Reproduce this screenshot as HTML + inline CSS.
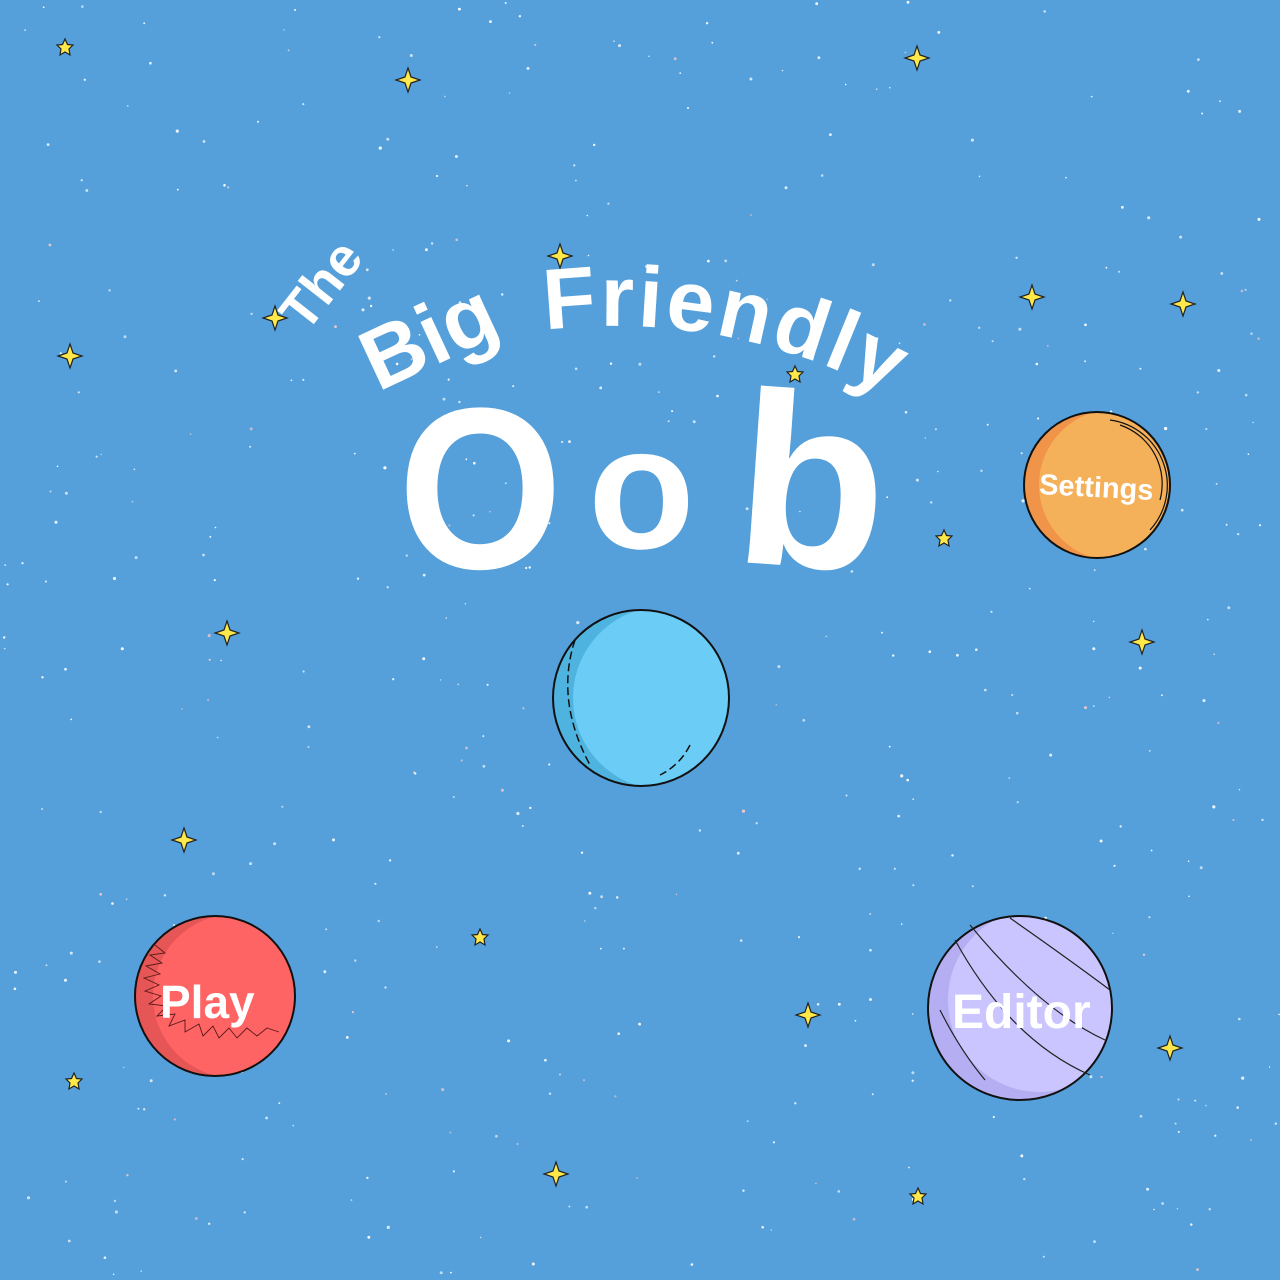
<!DOCTYPE html>
<html><head><meta charset="utf-8"><style>
html,body{margin:0;padding:0;width:1280px;height:1280px;overflow:hidden;background:#55a0da}
svg{position:absolute;left:0;top:0}
.t{font-family:"Liberation Sans",sans-serif;font-weight:bold;fill:#fff}
.lbl{font-family:"Liberation Sans",sans-serif;font-weight:bold;fill:#fff}
</style></head><body>
<svg id="s" width="1280" height="1280" viewBox="0 0 1280 1280">
<g id="dots"></g>
<defs>
<path id="arcF" d="M 545 330 A 580 580 0 0 1 960 440"/>
<clipPath id="cC"><circle cx="641" cy="698" r="88"/></clipPath>
<clipPath id="cS"><circle cx="1097" cy="485" r="73"/></clipPath>
<clipPath id="cP"><circle cx="215" cy="996" r="80"/></clipPath>
<clipPath id="cE"><circle cx="1020" cy="1008" r="92"/></clipPath>
<g id="star"><path d="M0,-12 L3,-3 L12,0 L3,3 L0,12 L-3,3 L-12,0 L-3,-3Z" fill="#ffe94a" stroke="#222" stroke-width="1.2"/></g>
<g id="star5"><path d="M0,-8 L2.5,-2.5 L8,-2 L4,2 L5,8 L0,5 L-5,8 L-4,2 L-8,-2 L-2.5,-2.5Z" fill="#ffe94a" stroke="#222" stroke-width="1.2"/></g>
</defs>
<!-- title -->
<text class="t" font-size="54" transform="translate(306,334) rotate(-52)">The</text>
<text class="t" font-size="86" transform="translate(378,392) rotate(-25)">Big</text>
<text class="t" font-size="86" letter-spacing="3"><textPath href="#arcF">Friendly</textPath></text>
<text class="t" font-size="230" x="398" y="568" transform="scale(0.92 1)" transform-origin="398 568">O</text>
<text class="t" font-size="175" x="588" y="548">o</text>
<text class="t" font-size="245" x="738" y="566" transform="rotate(4 800 470)">b</text>
<!-- center planet -->
<g clip-path="url(#cC)"><circle cx="641" cy="698" r="88" fill="#4fb3df"/><circle cx="665" cy="698" r="92" fill="#6bcdf5"/></g>
<circle cx="641" cy="698" r="88" fill="none" stroke="#111" stroke-width="2"/>
<path d="M575,640 Q555,700 590,765 M690,745 Q680,765 660,775" fill="none" stroke="#111" stroke-width="1.5" stroke-dasharray="8 4"/>
<!-- settings -->
<g clip-path="url(#cS)"><circle cx="1097" cy="485" r="73" fill="#f0944a"/><circle cx="1115" cy="485" r="76" fill="#f5b05a"/></g>
<circle cx="1097" cy="485" r="73" fill="none" stroke="#111" stroke-width="2"/>
<path d="M1110,420 A66,66 0 0 1 1150,530 M1120,425 A62,62 0 0 1 1160,500" fill="none" stroke="#111" stroke-width="1.2"/>
<text class="lbl" font-size="29" x="1039" y="497" transform="rotate(3 1097 490)">Settings</text>
<!-- play -->
<g clip-path="url(#cP)"><circle cx="215" cy="996" r="80" fill="#e65656"/><circle cx="235" cy="996" r="82" fill="#ff6464"/></g>
<circle cx="215" cy="996" r="80" fill="none" stroke="#111" stroke-width="2"/>
<path d="M155,945 l10,8 -15,2 12,8 -16,3 14,8 -16,4 15,7 -14,6 16,5 -12,8 18,2 -10,10 18,-2 -6,12 16,-6 0,12 14,-8 4,12 10,-10 6,12 10,-10 8,10 10,-10 10,8 10,-8 12,4" fill="none" stroke="#5a1a1a" stroke-width="0.9"/>
<text class="lbl" font-size="46" x="160" y="1018">Play</text>
<!-- editor -->
<g clip-path="url(#cE)"><circle cx="1020" cy="1008" r="92" fill="#b6aef2"/><circle cx="1040" cy="1000" r="92" fill="#cbc5ff"/></g>
<circle cx="1020" cy="1008" r="92" fill="none" stroke="#111" stroke-width="2"/>
<path d="M955,940 Q1010,1040 1090,1075 M970,925 Q1040,1010 1105,1040 M1010,918 Q1070,960 1110,990 M940,1010 Q960,1050 985,1080" fill="none" stroke="#222" stroke-width="1.2"/>
<text class="lbl" font-size="48" x="952" y="1028">Editor</text>
<!-- yellow stars -->
<use href="#star" x="917" y="58"/><use href="#star" x="408" y="80"/><use href="#star" x="275" y="318"/>
<use href="#star" x="70" y="356"/><use href="#star" x="1032" y="297"/><use href="#star" x="1183" y="304"/>
<use href="#star" x="227" y="633"/><use href="#star" x="1142" y="642"/><use href="#star" x="184" y="840"/>
<use href="#star" x="808" y="1015"/><use href="#star" x="1170" y="1048"/><use href="#star" x="556" y="1174"/>
<use href="#star" x="560" y="256"/>
<use href="#star5" x="65" y="47"/><use href="#star5" x="795" y="374"/><use href="#star5" x="944" y="538"/>
<use href="#star5" x="480" y="937"/><use href="#star5" x="74" y="1081"/><use href="#star5" x="918" y="1196"/>
</svg>
<script>
var g=document.getElementById('dots'),s=12345;
function r(){s=(s*16807)%2147483647;return s/2147483647;}
var h='';
for(var i=0;i<480;i++){var x=r()*1280,y=r()*1280,c=r()<0.12?'#f3c9c9':'#fff',rr=0.7+r()*0.9;
h+='<circle cx="'+x.toFixed(1)+'" cy="'+y.toFixed(1)+'" r="'+rr.toFixed(1)+'" fill="'+c+'" opacity="'+(0.6+r()*0.4).toFixed(2)+'"/>';}
g.innerHTML=h;
</script>
</body></html>
